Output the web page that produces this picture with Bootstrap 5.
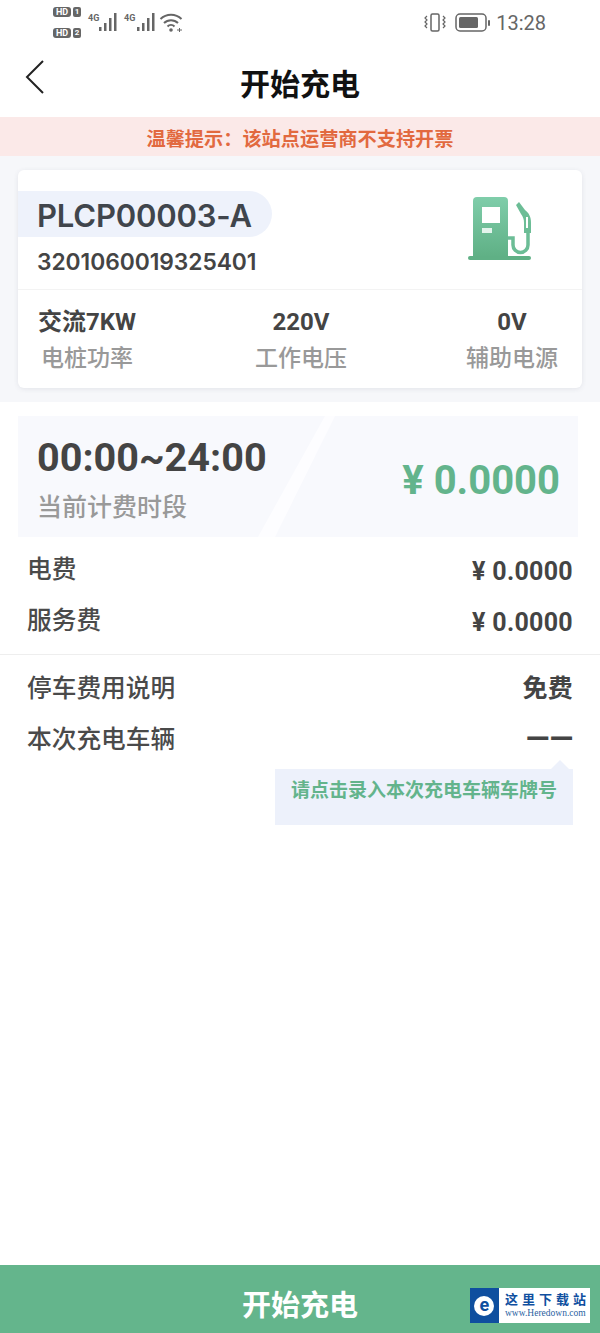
<!DOCTYPE html>
<html lang="zh">
  <head>
    <meta charset="utf-8" />
    <title>开始充电</title>
    <link href="https://cdn.jsdelivr.net/npm/bootstrap@5.3.3/dist/css/bootstrap.min.css" rel="stylesheet" />
    <style>
      body { font-family: "Roboto", "Noto Sans CJK SC", sans-serif; color: #444; background: #fff; }
      .app-page { height: 1333px; }
      .status-bar { height: 44px; padding: 7px 54px 0 53px; color: #666; }
      .hd-col { gap: 11px; width: 34px; }
      .hd-tag { font-size: 9px; line-height: 10px; font-weight: 700; color: #fff; background: #666; border-radius: 3px; height: 10px; width: 18px; text-align: center; }
      .hd-num { font-size: 8px; line-height: 10px; font-weight: 700; color: #fff; background: #666; border-radius: 2px; height: 10px; width: 8px; text-align: center; margin-left: 2px; }
      .clock { font-size: 20px; line-height: 24px; color: #666; margin-left: 5px; }
      .status-right { padding-top: 4px; }
      .top-nav { height: 73px; }
      .back-btn { left: 24px; top: 15px; }
      .nav-title { font-size: 30px; line-height: 40px; font-weight: 700; color: #111; padding-top: 21px; }
      .notice-bar { height: 39px; background: #fbe9e8; color: #e2693f; font-size: 19.2px; padding-top: 6px; line-height: 33px; font-weight: 700; }
      .card-zone { height: 246px; background: #f6f7fa; padding: 14px 18px; }
      .pile-card { height: 218px; background: #fff; border-radius: 6px; box-shadow: 0 1px 5px rgba(60, 70, 90, .1); }
      .pile-top { height: 120px; padding-top: 21px; border-bottom: 1px solid #f3f3f3; }
      .pile-code { width: 254px; height: 46px; background: #eef2fb; border-radius: 0 23px 23px 0; padding-left: 19px; font-size: 31px; line-height: 50px; font-weight: 600; color: #40454c; font-family: "Inter", "Noto Sans CJK SC", sans-serif; letter-spacing: -.2px; }
      .pile-no { padding-left: 19px; font-size: 22.8px; line-height: 30px; margin-top: 10px; font-weight: 600; color: #444; font-family: "Inter", sans-serif; letter-spacing: -.05px; }
      .pump-icon { right: 49px; top: 25px; }
      .stat-val { font-size: 24px; line-height: 30px; font-weight: 700; color: #444; }
      .stat-label { font-family: "Noto Sans CJK SC Medium", "Noto Sans CJK SC", sans-serif; font-size: 23px; line-height: 30px; margin-top: 4px; font-weight: 500; color: #999; }
      .stats-row { padding: 17px 24px 0 20px; }
      .fee-band { height: 121px; margin: 14px 22px 0 18px; background: #f8f9fd; padding: 19px 18px 0 19px; }
      .fee-band::after { content: ""; position: absolute; left: 240px; top: 0; width: 77px; height: 100%; background: #fdfdff; clip-path: polygon(67px 0, 77px 0, 17px 100%, 0 100%); }
      .time-span { font-size: 39.6px; line-height: 46px; font-weight: 700; color: #444; }
      .time-note { font-family: "Noto Sans CJK SC Medium", "Noto Sans CJK SC", sans-serif; font-size: 25px; line-height: 32px; margin-top: 8px; font-weight: 500; color: #999; }
      .fee-total { font-size: 40px; line-height: 46px; font-weight: 700; color: #63b48c; padding-top: 23px; }
      .info-row { height: 51px; padding: 0 27px; font-size: 24.7px; color: #4a4a4a; }
      .info-key { font-family: "Noto Sans CJK SC Medium", "Noto Sans CJK SC", sans-serif; padding-bottom: 3px; }
      .info-val { font-size: 25px; font-weight: 700; color: #444; letter-spacing: .3px; padding-top: 4px; }
      .free-val { padding-top: 0; }
      .fee-rows { padding-top: 7px; }
      .split-line { margin-top: 8px; border-top: 1px solid #eee; padding-top: 8px; }
      .dash-val { font-size: 31px; line-height: 1; letter-spacing: 0; padding-top: 0; padding-bottom: 2px; }
      .plate-tip { width: 298px; height: 56px; margin: 4px 27px 0 auto; background: #edf1fb; color: #63b48c; font-size: 19px; line-height: 44px; font-weight: 700; text-align: center; }
      .plate-tip::before { content: ""; position: absolute; right: 4px; top: -9px; border: 9px solid transparent; border-top: 0; border-bottom-color: #edf1fb; }
      .start-btn { height: 68px; padding: 16px 0 0; background: #64b58c; border: 0; border-radius: 0; color: #fff; font-size: 29px; font-weight: 700; }
      .start-btn:hover { background: #64b58c; color: #fff; }
      .site-mark { right: 10px; bottom: 10px; width: 120px; height: 35px; background: #fff; }
      .mark-logo { width: 31px; background: #0f4f9f; }
      .mark-text { padding-left: 6px; padding-top: 2px; }
      .mark-badge { width: 20px; height: 20px; background: #fff; color: #0f4f9f; border-radius: 50%; font-size: 18px; line-height: 17px; font-weight: 700; }
      .mark-name { font-family: "Noto Sans CJK SC", sans-serif; font-size: 13px; line-height: 17px; font-weight: 700; color: #0f4f9f; letter-spacing: 4px; white-space: nowrap; }
      .mark-url { font-family: "Liberation Serif", serif; font-size: 9.5px; line-height: 12px; color: #2a5f9f; white-space: nowrap; }
    </style>
  </head>
  <body>
    <div class="app-page d-flex flex-column position-relative overflow-hidden">
      <div class="status-bar d-flex justify-content-between align-items-start">
        <div class="d-flex">
          <div class="hd-col d-flex flex-column">
            <div class="d-flex"><span class="hd-tag">HD</span><span class="hd-num">1</span></div>
            <div class="d-flex"><span class="hd-tag">HD</span><span class="hd-num">2</span></div>
          </div>
          <svg width="96" height="26" viewBox="87 7 96 26" fill="#666">
            <text x="88" y="21" font-size="9" font-weight="700" font-family="Roboto">4G</text>
            <rect x="99" y="27" width="2.5" height="4" /><rect x="104" y="23" width="2.5" height="8" /><rect x="109" y="18" width="2.5" height="13" /><rect x="114" y="13" width="2.5" height="18" />
            <text x="124" y="21" font-size="9" font-weight="700" font-family="Roboto">4G</text>
            <rect x="137" y="27" width="2.5" height="4" /><rect x="142" y="23" width="2.5" height="8" /><rect x="147" y="18" width="2.5" height="13" /><rect x="152" y="13" width="2.5" height="18" />
            <path d="M160.500 19a15 15 0 0 1 21 0M164 23a10 10 0 0 1 14 0M167.500 26.500a5 5 0 0 1 7 0" fill="none" stroke="#666" stroke-width="2" />
            <circle cx="171" cy="30" r="1.800" />
            <path d="M177 30h5M179.500 28v4" stroke="#666" stroke-width="1" />
          </svg>
        </div>
        <div class="status-right d-flex align-items-center">
          <svg width="24" height="24" viewBox="0 0 24 24" fill="none" stroke="#666" stroke-width="1.5">
            <rect x="8" y="3" width="8" height="17" rx="1.500" />
            <path d="M4 5l-2 2 2 2-2 2 2 2-2 2 2 2M20 5l2 2-2 2 2 2-2 2 2 2-2 2" stroke-width="1.200" />
          </svg>
          <svg width="36" height="24" viewBox="0 0 36 24" class="ms-2">
            <rect x="1" y="3" width="30" height="17" rx="4" fill="none" stroke="#666" stroke-width="1.500" />
            <rect x="4" y="6" width="19" height="11" rx="1.500" fill="#666" />
            <rect x="33" y="9" width="2" height="6" rx="1" fill="#666" />
          </svg>
          <span class="clock">13:28</span>
        </div>
      </div>

      <div class="top-nav position-relative text-center">
        <svg class="back-btn position-absolute" width="22" height="36" viewBox="0 0 22 36" fill="none" stroke="#222" stroke-width="2">
          <path d="M19 2L3 18l16 16" />
        </svg>
        <div class="nav-title">开始充电</div>
      </div>

      <div class="notice-bar text-center">温馨提示：该站点运营商不支持开票</div>

      <div class="card-zone">
        <div class="pile-card">
          <div class="pile-top position-relative">
            <div class="pile-code">PLCP00003-A</div>
            <div class="pile-no">3201060019325401</div>
            <svg class="pump-icon position-absolute" width="65" height="68" viewBox="0 0 65 68">
              <defs>
                <linearGradient id="pumpFill" x1="0" y1="0" x2="0" y2="1">
                  <stop offset="0" stop-color="#7fcdaa" />
                  <stop offset="1" stop-color="#5fb085" />
                </linearGradient>
              </defs>
              <path d="M5 6a4 4 0 0 1 4-4h27a4 4 0 0 1 4 4v56H5z" fill="url(#pumpFill)" />
              <rect x="14" y="12" width="18" height="16" fill="#fff" />
              <rect x="14" y="33" width="10" height="5" fill="#e3f4ec" />
              <rect y="61" width="63" height="4" rx="2" fill="#5fb085" />
              <path d="M40 43h5v7a7.500 7.500 0 0 0 15 0V34" fill="none" stroke="#6cbd96" stroke-width="3.500" />
              <path d="M48 10l3-3 6 8c4 3 6 7 6 13v10h-7V28c0-4-1-6-3-9z" fill="#6cbd96" />
              <rect x="58" y="22" width="2" height="11" fill="#fff" />
            </svg>
          </div>
          <div class="stats-row d-flex justify-content-between text-center">
            <div>
              <div class="stat-val">交流7KW</div>
              <div class="stat-label">电桩功率</div>
            </div>
            <div>
              <div class="stat-val">220V</div>
              <div class="stat-label">工作电压</div>
            </div>
            <div>
              <div class="stat-val">0V</div>
              <div class="stat-label">辅助电源</div>
            </div>
          </div>
        </div>
      </div>

      <div class="fee-band d-flex justify-content-between position-relative">
        <div>
          <div class="time-span">00:00~24:00</div>
          <div class="time-note">当前计费时段</div>
        </div>
        <div class="fee-total">¥ 0.0000</div>
      </div>

      <div class="fee-rows">
        <div class="info-row d-flex justify-content-between align-items-center">
          <span class="info-key">电费</span><span class="info-val">¥ 0.0000</span>
        </div>
        <div class="info-row d-flex justify-content-between align-items-center">
          <span class="info-key">服务费</span><span class="info-val">¥ 0.0000</span>
        </div>
      </div>

      <div class="split-line">
        <div class="info-row d-flex justify-content-between align-items-center">
          <span class="info-key">停车费用说明</span><span class="info-val free-val">免费</span>
        </div>
        <div class="info-row d-flex justify-content-between align-items-center">
          <span class="info-key">本次充电车辆</span><span class="info-val dash-val">——</span>
        </div>
      </div>

      <div class="plate-tip position-relative">请点击录入本次充电车辆车牌号</div>

      <button type="button" class="btn start-btn w-100 mt-auto">开始充电</button>

      <div class="site-mark position-absolute d-flex">
        <div class="mark-logo d-flex align-items-center justify-content-center">
          <div class="mark-badge text-center">e</div>
        </div>
        <div class="mark-text">
          <div class="mark-name">这里下载站</div>
          <div class="mark-url">www.Heredown.com</div>
        </div>
      </div>
    </div>

    <script src="https://cdn.jsdelivr.net/npm/bootstrap@5.3.3/dist/js/bootstrap.bundle.min.js"></script>
  </body>
</html>
